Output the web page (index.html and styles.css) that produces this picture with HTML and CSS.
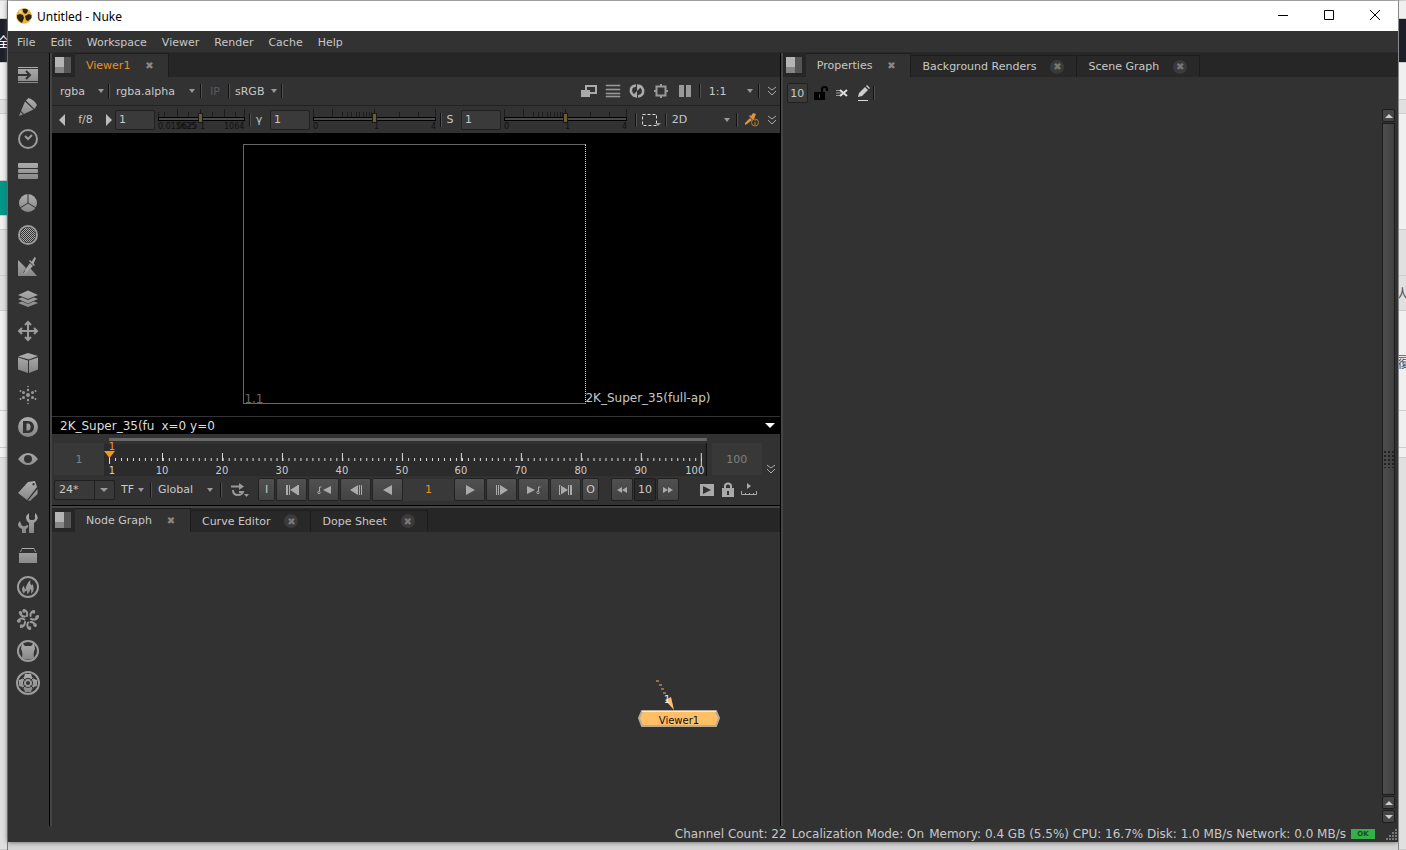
FILE: index.html
```
<!DOCTYPE html>
<html lang="en">
<head>
  <meta charset="UTF-8">
  <meta name="viewport" content="width=device-width, initial-scale=1">
  <title>Untitled - Nuke</title>
  <link rel="stylesheet" href="styles.css">
</head>
<body>
  <!-- browser page behind the window, left edge -->
  <div class="behind behind-left">
    <div class="strip h20"></div>
    <div class="strip dark h44"><span>全</span></div>
    <div class="strip h36"></div>
    <div class="strip grey h14"></div>
    <div class="strip h66"></div>
    <div class="strip teal h34"></div>
    <div class="strip h14"></div>
    <div class="strip grey h46"></div>
    <div class="strip grey h34"></div>
    <div class="strip h100"></div>
    <div class="strip h36"></div>
    <div class="strip h10"></div>
    <div class="strip grey rest"></div>
  </div>

  <div class="window">
    <header class="titlebar">
      <svg class="logo" viewBox="0 0 16 16"><circle cx="8" cy="8" r="7.8" fill="#e8b640"/><path d="M1 7l3-1 3 1 1 3-2 5-3-2-2-3zM6.500 1Q10 0 12 2l-1 3-2 1-2-2zM9 8l4-2 2.500 1v3L12 13l-2-1z" fill="#2b2410"/><path d="M2.500 3.500 5 2l1.500 2L4 5z" fill="#f6dc8c"/></svg>
      <span class="title">Untitled - Nuke</span>
      <button class="win-btn" aria-label="Minimize"><svg viewBox="0 0 12 12"><path d="M1 5.500h10"/></svg></button>
      <button class="win-btn" aria-label="Maximize"><svg viewBox="0 0 12 12"><path d="M1.500 .5h9v9h-9z"/></svg></button>
      <button class="win-btn" aria-label="Close"><svg viewBox="0 0 12 12"><path d="M1 0l10 10M11 0L1 10"/></svg></button>
    </header>

    <nav class="menubar">
      <button>File</button>
      <button>Edit</button>
      <button>Workspace</button>
      <button>Viewer</button>
      <button>Render</button>
      <button>Cache</button>
      <button>Help</button>
    </nav>

    <div class="main">
      <!-- node toolbar -->
      <aside class="toolbar">
        <svg class="defs" aria-hidden="true">
          <defs>
            <linearGradient id="g" gradientUnits="userSpaceOnUse" x1="0" y1="2" x2="0" y2="22"><stop offset="0" stop-color="#b0b0b0"/><stop offset="1" stop-color="#858585"/></linearGradient>
            <pattern id="dots" width="2" height="2" patternUnits="userSpaceOnUse"><rect width="1" height="1" fill="#aaa"/><rect x="1" y="1" width="1" height="1" fill="#aaa"/></pattern>
          </defs>
        </svg>
        <button aria-label="Image"><svg viewBox="0 0 24 24"><path d="M2 4h20v1H2zM2 6h20v12H2zM2 19h20v1H2z" fill="url(#g)"/><path d="M2 12h11M10 8l4 4-4 4" class="cut"/></svg></button>
        <button aria-label="Draw"><svg viewBox="0 0 24 24"><path d="M3 21l1.500-4 2.500 2.500zM5 16 9 6.500l8.500 8L8 19zM10 5.500l2.500-2.500q6 2 8.500 7l-2.500 4z" fill="url(#g)"/></svg></button>
        <button aria-label="Time"><svg viewBox="0 0 24 24"><circle cx="12" cy="12" r="9" class="line"/><path d="M9 9l3 3 4-4" class="line"/></svg></button>
        <button aria-label="Channel"><svg viewBox="0 0 24 24"><rect x="2" y="4" width="20" height="5" rx="1" fill="url(#g)"/><rect x="2" y="10" width="20" height="4" rx="1" fill="url(#g)"/><rect x="2" y="15" width="20" height="5" rx="1" fill="url(#g)"/></svg></button>
        <button aria-label="Color"><svg viewBox="0 0 24 24"><circle cx="12" cy="12" r="9" fill="url(#g)"/><path d="M12 3v9M12 12l-8 5M12 12l8 5" class="thin-cut"/></svg></button>
        <button aria-label="Filter"><svg viewBox="0 0 24 24"><circle cx="12" cy="12" r="9" class="line"/><circle cx="12" cy="12" r="7.500" fill="url(#dots)"/></svg></button>
        <button aria-label="Keyer"><svg viewBox="0 0 24 24"><path d="M2 5l8 8-3 5 5-2 2-3 7 8H2z" fill="url(#g)"/><path d="M14 8l3 3-7 7-2 1 1-4zM13 6l1-1 5 5-1 1zM15.500 7l3-5 1.500 1-2.500 6z" fill="#a5a5a5"/></svg></button>
        <button aria-label="Merge"><svg viewBox="0 0 24 24"><path d="M12 3.500l10 4.500-10 4L2 8zM2 12l4-1.500 6 2.500 6-2.500 4 1.500-10 4.500zM2 16l4-1.500 6 2.500 6-2.500 4 1.500-10 4z" fill="url(#g)"/></svg></button>
        <button aria-label="Transform"><svg viewBox="0 0 24 24"><path d="M12 3v18M3 12h18M9 6l3-3 3 3M9 18l3 3 3-3M6 9l-3 3 3 3M18 9l3 3-3 3" class="line"/></svg></button>
        <button aria-label="3D"><svg viewBox="0 0 24 24"><path d="M12 2l10 3-9 3.500L2 5.500zM2 6.500l10 3V22L2 18.500zM13 9.500l9-3v12L13 22z" fill="url(#g)"/></svg></button>
        <button aria-label="Particles"><svg viewBox="0 0 24 24"><g fill="#999"><circle cx="12" cy="12" r="2"/><circle cx="12" cy="7" r="1.200"/><circle cx="12" cy="17" r="1.200"/><circle cx="7.500" cy="9.500" r="1.500"/><circle cx="16.500" cy="9.500" r="1.500"/><circle cx="7.500" cy="14.500" r="1.500"/><circle cx="16.500" cy="14.500" r="1.500"/><circle cx="4.500" cy="8" r="1"/><circle cx="19.500" cy="8" r="1"/><circle cx="4.500" cy="16" r="1"/><circle cx="19.500" cy="16" r="1"/><circle cx="12" cy="3.500" r=".8"/><circle cx="12" cy="20.500" r=".8"/></g></svg></button>
        <button aria-label="Deep"><svg viewBox="0 0 24 24"><path fill-rule="evenodd" d="M12 2a10 10 0 1 1 0 20a10 10 0 0 1 0-20zM7 6v12h5c8 0 8-12 0-12zM10.500 8.500h1.500c3.500 0 3.500 7 0 7h-1.500z" fill="url(#g)"/></svg></button>
        <button aria-label="Views"><svg viewBox="0 0 24 24"><path fill-rule="evenodd" d="M2 12q4.500-6 10-6t10 6q-4.500 6-10 6T2 12zM12 8a4 4 0 1 0 0 8 4 4 0 0 0 0-8z" fill="url(#g)"/></svg></button>
        <button aria-label="MetaData"><svg viewBox="0 0 24 24"><path fill-rule="evenodd" d="M2 14L12 3l7-1 2 6-10 13zM17.500 4a1.200 1.200 0 1 0 .1 0zM21.500 10v5L14 22l-2-.5z" fill="url(#g)"/></svg></button>
        <button aria-label="ToolSets"><svg viewBox="0 0 24 24"><path d="M13 2q-6 5 0 10v10h5V12q7-5 1-10v5q0 2-3 2t-3-2zM4 10q-4 4 0 7l2 1v4h4v-4q3-2 2-4l-3 1q-3 1-4-2z" fill="url(#g)"/></svg></button>
        <button aria-label="Other"><svg viewBox="0 0 24 24"><path d="M3 10h18v10H3zM4 9l2-4h12l2 4h-1l-1-3H6L5 9z" fill="url(#g)"/></svg></button>
        <button aria-label="Furnace"><svg viewBox="0 0 24 24"><circle cx="12" cy="12" r="10" class="line"/><path d="M8 18.500q-4-4 0-8 0 3 1.500 4Q10 9 14.500 5q-1 4 1 5.500.5-1 .5-2 4 6-1 10.500 1-3-.5-5-.5 3-3.500 5.500.5-3-.5-4-2 1-2.500 3z" fill="url(#g)"/></svg></button>
        <button aria-label="Ocula"><svg viewBox="0 0 24 24"><path d="M11 9Q12 4 8 3M14.500 9Q14 5 18 4M15 12q6 2 7-3M14.500 15q4 0 5 4M12 15.500q-2 5 2 6.500M9 15q0 4-4 5M8.500 12.500Q4 10 2 14M9 9.500Q5 10 4 5" class="bold"/><g fill="#999"><circle cx="8" cy="4" r="1.800"/><circle cx="17.500" cy="5" r="1.800"/><circle cx="21" cy="10" r="1.800"/><circle cx="19" cy="18" r="1.800"/><circle cx="13.500" cy="21" r="1.800"/><circle cx="5.500" cy="19" r="1.800"/><circle cx="3" cy="14" r="1.800"/><circle cx="4.500" cy="6" r="1.800"/></g></svg></button>
        <button aria-label="Cara"><svg viewBox="0 0 24 24"><circle cx="12" cy="12" r="10" class="line"/><path d="M6 4l3 3h6l3-3 1 6q-2 3-1 9-6 3-12 0 1-6-1-9z" fill="url(#g)"/></svg></button>
        <button aria-label="Air"><svg viewBox="0 0 24 24"><circle cx="12" cy="12" r="11" class="line"/><path fill-rule="evenodd" d="M9 3h6l1 3 2 2 3 1v6l-3 1-2 2-1 3H9l-1-3-2-2-3-1V9l3-1 2-2zM12 7a5 5 0 1 0 0 10 5 5 0 0 0 0-10z" fill="url(#g)"/><circle cx="12" cy="12" r="3" class="line"/><path d="M6.500 6.500l3 3M17.500 6.500l-3 3M6.500 17.500l3-3M17.500 17.500l-3-3" class="thin-cut"/></svg></button>
      </aside>

      <div class="left-col">
        <section class="viewer-panel">
          <div class="tabs">
            <button class="pane-btn" aria-label="Pane menu"></button>
            <div class="tab active orange"><a href="#">Viewer1</a><button class="close" aria-label="Close">✖</button></div>
          </div>

          <div class="row channels">
            <select class="w-rgba" aria-label="Channels"><option>rgba</option></select>
            <i class="sep"></i>
            <select class="w-alpha" aria-label="Alpha channel"><option>rgba.alpha</option></select>
            <i class="sep"></i>
            <button class="ip">IP</button>
            <i class="sep"></i>
            <select class="w-lut" aria-label="Viewer process"><option>sRGB</option></select>
            <i class="sep"></i>
            <span class="grow"></span>
            <div class="view-icons">
              <button aria-label="Wipe"><svg viewBox="0 0 16 14"><path d="M5 6V2h10v7H9" fill="none" stroke="#aaa" stroke-width="2"/><path d="M0 6h9v7H0z" fill="#aaa"/></svg></button>
              <button aria-label="Scanlines"><svg viewBox="0 0 16 14"><path d="M1 1h14v1H1zM1 5h14v1H1zM1 9h14v1H1zM1 12h14v1H1z" fill="#999" stroke="#999" stroke-width=".6"/></svg></button>
              <button aria-label="Refresh"><svg viewBox="0 0 16 14"><path d="M7 1.500Q1 2 2 8q1 3 4 4M9 12.500q6-1 5-7-1-3-4-4" fill="none" stroke="#aaa" stroke-width="2.500"/><path d="M8 7v7l-5-2zM8 7V0l5 2z" fill="#aaa"/></svg></button>
              <button aria-label="Region"><svg viewBox="0 0 16 14"><path d="M3.500 2.500h9v9h-9zM8 0v2M8 12v2M1 7h2M13 7h2" fill="none" stroke="#999" stroke-width="2"/></svg></button>
              <button aria-label="Pause"><svg viewBox="0 0 16 14"><path d="M2 1h5v12H2zM9 1h5v12H9z" fill="#999"/></svg></button>
            </div>
            <i class="sep"></i>
            <select class="w-zoom" aria-label="Zoom"><option>1:1</option></select>
            <i class="sep"></i>
            <button class="chev" aria-label="More"><svg viewBox="0 0 10 10"><path d="M1 1l4 3 4-3M1 5l4 4 4-4"/></svg></button>
          </div>

          <div class="row gains">
            <button class="nudge" aria-label="Previous stop"><svg viewBox="0 0 6 12"><path d="M6 0v12L0 6z"/></svg></button>
            <span class="fstop">f/8</span>
            <button class="nudge" aria-label="Next stop"><svg viewBox="0 0 6 12"><path d="M0 0v12l6-6z"/></svg></button>
            <input class="num" type="text" value="1" aria-label="Gain">
            <div class="slider slider-gain">
              <svg viewBox="0 0 87 22"><path d="M0.500 3v7M6.500 3v7M19.500 0v10M30.500 3v7M42.500 0v10M54.500 3v7M66.500 0v10M77.500 3v7M86.500 0v10" class="tick"/><text x="0" y="20">0.015625</text><text x="19" y="20">0625</text><text x="42" y="20">1</text><text x="66" y="20">1064</text></svg>
              <input type="range" min="0" max="100" value="49" aria-label="Gain slider">
            </div>
            <i class="sep"></i>
            <label class="lbl" for="gamma">γ</label>
            <input class="num" id="gamma" type="text" value="1">
            <div class="slider">
              <svg viewBox="0 0 123 22"><path d="M0.500 0v10M19.500 0v10M29.500 3v7M34.500 3v7M38.500 3v7M43.500 3v7M46.500 3v7M50.500 3v7M53.500 3v7M56.500 3v7M58.500 3v7M61.500 0v10M86.500 3v7M105.500 3v7M122.500 0v10" class="tick"/><text x="0" y="20">0</text><text x="61" y="20">1</text><text x="118" y="20">4</text></svg>
              <input type="range" min="0" max="100" value="50" aria-label="Gamma slider">
            </div>
            <i class="sep"></i>
            <label class="lbl" for="sat">S</label>
            <input class="num" id="sat" type="text" value="1">
            <div class="slider">
              <svg viewBox="0 0 123 22"><path d="M0.500 0v10M19.500 0v10M29.500 3v7M34.500 3v7M38.500 3v7M43.500 3v7M46.500 3v7M50.500 3v7M53.500 3v7M56.500 3v7M58.500 3v7M61.500 0v10M86.500 3v7M105.500 3v7M122.500 0v10" class="tick"/><text x="0" y="20">0</text><text x="61" y="20">1</text><text x="118" y="20">4</text></svg>
              <input type="range" min="0" max="100" value="50" aria-label="Saturation slider">
            </div>
            <span class="grow"></span>
            <i class="sep"></i>
            <button class="marquee" aria-label="Selection mode"><svg viewBox="0 0 20 14"><path d="M1.500 1.500h14v11h-14z" fill="none" stroke="#ddd" stroke-dasharray="3 2"/><path d="M14 10h6l-3 3z" fill="#999"/></svg></button>
            <i class="sep"></i>
            <select class="w-2d" aria-label="View"><option>2D</option></select>
            <i class="sep"></i>
            <button class="picker" aria-label="Color sampling"><svg viewBox="0 0 16 16"><path d="M1 11l5-5 2 2-5 4-2 1zM5 4l1-1 5 5-1 1zM7 4l2-3 3 1-2 5z" fill="#d9963e"/><circle cx="11" cy="10.500" r="3.500" fill="#323232" stroke="#b87932"/><path d="M11 8v1M11 10v3" stroke="#b87932"/></svg></button>
            <button class="chev" aria-label="More"><svg viewBox="0 0 10 10"><path d="M1 1l4 3 4-3M1 5l4 4 4-4"/></svg></button>
          </div>

          <!-- the image plane -->
          <div class="canvas">
            <div class="format">
              <span class="origin">1,1</span>
              <span class="format-name">2K_Super_35(full-ap)</span>
            </div>
          </div>
          <div class="info">
            <span class="info-format">2K_Super_35(fu</span>
            <span>x=0 y=0</span>
            <button aria-label="Collapse"><svg viewBox="0 0 10 5"><path d="M0 0h10L5 5z" fill="#fff"/></svg></button>
          </div>

          <div class="timeline">
            <span class="range">1</span>
            <svg class="ruler" viewBox="0 0 603 41">
              <rect x="0" y="9" width="603" height="32" fill="#2b2b2b"/>
              <rect x="5" y="3" width="598" height="3" fill="#686868"/>
              <path d="M602.500 8v33" stroke="#111"/>
              <path d="M5 24.500H598" pathLength="594.600" stroke="#ddd" stroke-width="3" stroke-dasharray="1 5"/>
              <path d="M5.500 20v9M58.500 18v8M118.500 18v8M178.500 18v8M238.500 18v8M298.500 18v8M357.500 18v8M417.500 18v8M477.500 18v8M537.500 18v8M597.500 18v13" stroke="#ddd"/>
              <path d="M0 16h11l-5.500 7z" fill="#f7941d"/>
              <g class="frames">
                <text x="8" y="15" class="cur">1</text>
                <text x="8" y="39">1</text><text x="58" y="39">10</text><text x="118" y="39">20</text><text x="178" y="39">30</text><text x="238" y="39">40</text><text x="298" y="39">50</text><text x="357" y="39">60</text><text x="417" y="39">70</text><text x="477" y="39">80</text><text x="537" y="39">90</text><text x="591" y="39">100</text>
              </g>
            </svg>
            <span class="range">100</span>
            <button class="chev" aria-label="More"><svg viewBox="0 0 10 10"><path d="M1 1l4 3 4-3M1 5l4 4 4-4"/></svg></button>
          </div>

          <div class="playback">
            <select class="fps" aria-label="Frames per second"><option>24*</option></select>
            <select class="w-tf" aria-label="Time format"><option>TF</option></select>
            <i class="sep"></i>
            <select class="w-global" aria-label="Frame range"><option>Global</option></select>
            <i class="sep"></i>
            <button class="loop" aria-label="Playback mode"><svg viewBox="0 0 20 16"><path d="M1 4.500h10M3 8q0 5 5 5 4 0 5-3H9" fill="none" stroke="#999" stroke-width="2"/><path d="M9 1l5 3.500L9 8z" fill="#999"/><path d="M14 12h5l-2.500 3z" fill="#999"/></svg></button>
            <div class="keys">
              <button class="key slim">I</button>
              <button class="key" aria-label="First frame"><svg viewBox="0 0 16 12"><path d="M2 1h2v10H2zM5 1h1v10H5zM14 1v10L6 6zM13 1h2v10h-2z"/></svg></button>
              <button class="key" aria-label="Previous keyframe"><svg viewBox="0 0 16 12"><path d="M15 2v8L7 6z"/><path d="M5.500 3h-2v4" class="st"/><circle cx="3" cy="8.500" r="1.200" class="st"/></svg></button>
              <button class="key" aria-label="Step back"><svg viewBox="0 0 16 12"><path d="M10 1v10L2 6zM11 1h1v10h-1zM13 1h1v10h-1z"/></svg></button>
              <button class="key" aria-label="Play backward"><svg viewBox="0 0 16 12"><path d="M12 1v10L3 6z"/></svg></button>
            </div>
            <input class="frame" type="text" value="1" aria-label="Current frame">
            <div class="keys">
              <button class="key" aria-label="Play forward"><svg viewBox="0 0 16 12"><path d="M4 1v10l9-5z"/></svg></button>
              <button class="key" aria-label="Step forward"><svg viewBox="0 0 16 12"><path d="M6 1v10l8-5zM2 1h1v10H2zM4 1h1v10H4z"/></svg></button>
              <button class="key" aria-label="Next keyframe"><svg viewBox="0 0 16 12"><path d="M1 2v8l8-4z"/><path d="M14.500 3h-2v4" class="st"/><circle cx="12" cy="8.500" r="1.200" class="st"/></svg></button>
              <button class="key" aria-label="Last frame"><svg viewBox="0 0 16 12"><path d="M1 1h2v10H1zM2 1v10l8-5zM10 1h1v10h-1zM12 1h2v10h-2z"/></svg></button>
              <button class="key slim">O</button>
            </div>
            <div class="keys skip">
              <button class="key mid" aria-label="Skip back"><svg viewBox="0 0 16 12"><path d="M8 3v6L3 6zM13 3v6L8 6z"/></svg></button>
              <input class="step" type="text" value="10" aria-label="Frame increment">
              <button class="key mid" aria-label="Skip forward"><svg viewBox="0 0 16 12"><path d="M3 3v6l5-3zM8 3v6l5-3z"/></svg></button>
            </div>
            <span class="grow"></span>
            <div class="extras">
              <button aria-label="Flipbook"><svg viewBox="0 0 16 16"><path fill-rule="evenodd" d="M1 2h14v12H1zM4 4v8l8-4z" fill="#aaa"/></svg></button>
              <button aria-label="Lock range"><svg viewBox="0 0 16 16"><path d="M5 7V4q0-2.500 3-2.500T11 4v3" fill="none" stroke="#aaa" stroke-width="2"/><path d="M2 6h12v9H2z" fill="#aaa"/><path d="M8 9v4" stroke="#333" stroke-width="2"/></svg></button>
              <button aria-label="Set range"><svg viewBox="0 0 16 16"><path d="M6 1v6l4-3z" fill="#aaa"/><path d="M.5 9v3.500h15V9M4.500 11v2M8.500 11v2M12.500 11v2" fill="none" stroke="#aaa"/></svg></button>
            </div>
          </div>
        </section>

        <section class="node-panel">
          <div class="tabs">
            <button class="pane-btn" aria-label="Pane menu"></button>
            <div class="tab active wide"><a href="#">Node Graph</a><button class="close" aria-label="Close">✖</button></div>
            <div class="tab"><a href="#">Curve Editor</a><button class="close" aria-label="Close">✖</button></div>
            <div class="tab"><a href="#">Dope Sheet</a><button class="close" aria-label="Close">✖</button></div>
          </div>
          <div class="graph">
            <div class="node">
              <svg class="arrow" viewBox="0 0 20 32"><path d="M0 2h3M3 6h3M5 10h3M7 14h3" stroke="#e8b263"/><path d="M9 21l6-3 3 13z" fill="#ffbf66"/><text x="8" y="24">1</text></svg>
              <svg class="node-body" viewBox="0 0 82 17"><path d="M4 1h74l3 7-3 8H4L1 8z" fill="#ffbf66" stroke="#b9aa96" stroke-width="2"/><path d="M4 1.500h74" stroke="#eee"/></svg>
              <span class="node-name">Viewer1</span>
            </div>
          </div>
        </section>
      </div>

      <section class="right-col">
        <div class="tabs">
          <button class="pane-btn" aria-label="Pane menu"></button>
          <div class="tab active"><a href="#">Properties</a><button class="close" aria-label="Close">✖</button></div>
          <div class="tab"><a href="#">Background Renders</a><button class="close" aria-label="Close">✖</button></div>
          <div class="tab"><a href="#">Scene Graph</a><button class="close" aria-label="Close">✖</button></div>
        </div>
        <div class="prop-bar">
          <input class="max" type="text" value="10" aria-label="Maximum panels">
          <button aria-label="Lock panels"><svg viewBox="0 0 16 16"><path d="M9 7V4q0-2 2.500-2T14 4v2" fill="none" stroke="#000" stroke-width="2"/><path d="M1 7h11v8H1z" fill="#000"/><path d="M6.500 9v4" stroke="#444"/></svg></button>
          <button aria-label="Clear panels"><svg viewBox="0 0 16 16"><path d="M2 5.500h6M2 8h5M2 10.500h6" stroke="#999"/><path d="M6 5l7 6M13 5l-7 6" stroke="#ddd" stroke-width="2"/></svg></button>
          <button aria-label="Edit"><svg viewBox="0 0 16 16"><path d="M3 12l1-4 6-6 3 3-6 6zM11 1l1-1 3 3-1 1z" fill="#ccc"/><path d="M3 15.500h10" stroke="#ddd"/></svg></button>
          <i class="sep"></i>
        </div>
        <div class="scroller">
          <div class="props"></div>
          <div class="scrollbar">
            <button aria-label="Scroll up"><svg viewBox="0 0 8 4"><path d="M0 4h8L4 0z"/></svg></button>
            <div class="thumb"><i class="grip"></i></div>
            <button aria-label="Scroll up"><svg viewBox="0 0 8 4"><path d="M0 4h8L4 0z"/></svg></button>
            <button aria-label="Scroll down"><svg viewBox="0 0 8 4"><path d="M0 0h8L4 4z"/></svg></button>
          </div>
        </div>
      </section>
    </div>

    <footer class="status">
      <span>Channel Count: 22</span>
      <span>Localization Mode: On</span>
      <span>Memory: 0.4 GB (5.5%) CPU: 16.7% Disk: 1.0 MB/s Network: 0.0 MB/s</span>
      <b class="ok">OK</b>
      <svg class="resize" viewBox="0 0 12 12"><path d="M9 1h2v2H9zM9 4h2v2H9zM6 4h2v2H6zM9 7h2v2H9zM6 7h2v2H6zM3 7h2v2H3zM9 10h2v2H9zM6 10h2v2H6zM3 10h2v2H3zM0 10h2v2H0z" fill="#777"/></svg>
    </footer>
  </div>

  <!-- right edge -->
  <div class="behind behind-right">
    <div class="strip h20"></div>
    <div class="strip dark h44"></div>
    <div class="strip h36"></div>
    <div class="strip grey h14"></div>
    <div class="strip h115"></div>
    <div class="strip grey h46"></div>
    <div class="strip grey h34"><span>人</span></div>
    <div class="strip h100"><span>履</span></div>
    <div class="strip h36"></div>
    <div class="strip h10"></div>
    <div class="strip grey rest"></div>
  </div>
</body>
</html>
```
FILE: styles.css
```
* { box-sizing: border-box; }
body { margin: 0; height: 100vh; display: grid; grid-template-columns: 8px 1fr 8px; font-family: "DejaVu Sans", Verdana, sans-serif; font-size: 11px; color: #c8c8c8; background: #d4d4d4; overflow: hidden; }
button, input, select { font: inherit; color: inherit; margin: 0; padding: 0; border: none; background: none; border-radius: 0; outline: none; }
button { display: flex; align-items: center; justify-content: center; }
a { color: inherit; text-decoration: none; }
svg { display: block; }
.grow { flex: 1; }

/* page behind the window */
.behind { display: flex; flex-direction: column; overflow: hidden; padding-top: 1px; }
.behind-left { border-right: 1px solid #777; }
.behind-right { border-left: 1px solid #888; }
.strip { flex: none; background: #f0f0f0; border-bottom: 1px solid #ccc; overflow: hidden; display: flex; align-items: center; justify-content: center; font-family: "Noto Sans CJK SC", sans-serif; font-size: 14px; color: #555; }
.strip.grey { background: #e0e0e0; }
.strip.dark { background: #1e1f29; color: #fff; }
.strip.teal { background: #009788; }
.h10 { height: 10px; }
.h14 { height: 14px; }
.h20 { height: 18px; }
.h34 { height: 35px; }
.h36 { height: 37px; }
.h44 { height: 44px; }
.h46 { height: 46px; }
.h66 { height: 67px; }
.h100 { height: 100px; }
.h115 { height: 116px; }
.rest { flex: 1; }

.window { display: flex; flex-direction: column; min-width: 0; margin: 1px 0 8px; background: #323232; box-shadow: 0 0 5px #555; }
.titlebar { height: 30px; flex: none; display: flex; align-items: center; background: #fff; color: #000; padding-left: 8px; }
.logo { width: 16px; height: 16px; margin-right: 5px; }
.title { flex: 1; font-family: "Noto Sans", sans-serif; font-size: 12px; }
.win-btn { width: 46px; height: 30px; }
.win-btn svg { width: 12px; height: 12px; fill: none; stroke: #000; }

.menubar { height: 22px; flex: none; display: flex; padding-left: 9px; gap: 15px; border-bottom: 1px solid #2a2a2a; }
.menubar button { height: 22px; }

.main { flex: 1; display: flex; min-height: 0; }

/* node toolbar */
.toolbar { width: 42px; flex: none; padding-top: 6px; border-right: 1px solid #000; }
.toolbar button { width: 40px; height: 32px; }
.toolbar button svg { width: 24px; height: 24px; }
.defs { width: 0; height: 0; }
.line { fill: none; stroke: #9c9c9c; stroke-width: 2; }
.bold { fill: none; stroke: #9c9c9c; stroke-width: 2; stroke-linecap: round; }
.cut { fill: none; stroke: #323232; stroke-width: 2; }
.thin-cut { fill: none; stroke: #323232; stroke-width: 1; }

.left-col { flex: 730; min-width: 0; display: flex; flex-direction: column; border-left: 2px solid #444; border-right: 1px solid #000; }
.right-col { flex: 617; min-width: 0; display: flex; flex-direction: column; border-left: 2px solid #444; }

/* tabs */
.tabs { height: 24px; flex: none; display: flex; align-items: flex-end; background: #262626; padding-left: 3px; }
.pane-btn { width: 16px; height: 16px; align-self: center; margin-right: 4px; background: linear-gradient(90deg, transparent 9px, #555 9px), linear-gradient(#b5b5b5 10px, #868686 10px); }
.tab { height: 22px; display: flex; align-items: center; padding: 0 12px 0 11px; gap: 14px; border: 1px solid #1c1c1c; border-width: 1px 1px 0 0; border-radius: 2px 2px 0 0; background: #282828; }
.tab.active { height: 24px; gap: 12px; background: #323232; }
.tab.orange { color: #ee8e24; }
.close { width: 14px; height: 14px; border-radius: 50%; background: #3a3a3a; color: #777; font-size: 10px; }
.tab.active .close { background: none; color: #888; }

/* viewer controls */
.row { flex: none; display: flex; align-items: center; }
.channels { height: 29px; border-bottom: 1px solid #222; padding-left: 8px; }
.gains { height: 27px; padding-left: 7px; }
.sep { width: 2px; height: 14px; flex: none; border-left: 1px solid #111; border-right: 1px solid #505050; }
select { appearance: none; height: 20px; background: url("data:image/svg+xml,%3Csvg xmlns='http://www.w3.org/2000/svg' width='6' height='4'%3E%3Cpath d='M0 0h6L3 4z' fill='%23999'/%3E%3C/svg%3E") no-repeat right 5px center; }
.w-rgba { width: 48px; padding: 0; background-position: right 4px center; }
.w-alpha { width: 84px; margin-left: 6px; }
.w-lut { width: 46px; margin-left: 5px; background-position: right 4px center; }
.w-zoom { width: 49px; margin-left: 8px; }
.w-2d { width: 64px; margin-left: 5px; background-position: right 6px center; }
.w-tf { width: 29px; margin-left: 6px; background-position: right 6px center; }
.w-global { width: 62px; margin-left: 6px; background-position: right 7px center; }
.ip { width: 26px; color: #5a5a5a; }
.view-icons { display: flex; gap: 8px; margin-right: 6px; }
.view-icons svg { width: 16px; height: 14px; }
.chev { width: 20px; flex: none; padding-left: 4px; }
.chev svg { width: 10px; height: 10px; fill: none; stroke: #aaa; }
.nudge svg { width: 6px; height: 12px; fill: #bbb; }
.fstop { width: 41px; text-align: center; }
.num { width: 40px; height: 20px; flex: none; margin: 0 3px; padding-left: 3px; background: #3a3a3a; border: 1px solid #202020; border-radius: 2px; }
.lbl { width: 16px; flex: none; text-align: center; }
.slider { width: 123px; flex: none; display: grid; margin-right: 4px; }
.slider-gain { width: 87px; }
.slider svg, .slider input { grid-area: 1 / 1; width: 100%; height: 22px; }
.slider text { font-size: 8px; fill: #111; }
.tick { stroke: #1c1c1c; fill: none; }
.slider input { appearance: none; height: 20px; }
.slider input::-webkit-slider-runnable-track { height: 4px; border: 1px solid #000; background: #4a4a4a; }
.slider input::-webkit-slider-thumb { -webkit-appearance: none; width: 5px; height: 10px; margin-top: -5px; background: #6d5c33; border: 1px solid #191919; }
.marquee { width: 28px; }
.marquee svg { width: 20px; height: 14px; }
.picker { margin-left: 6px; }
.picker svg { width: 16px; height: 16px; }

/* image plane */
.canvas { flex: none; height: 283px; background: #000; display: flex; justify-content: center; padding: 11px 2px 0 0; font-size: 12px; }
.format { position: relative; width: 343px; height: 260px; border: 1px solid #666; border-right: 1px dotted #ddd; }
.origin { position: absolute; left: 0; bottom: -3px; color: #666; }
.format-name { position: absolute; left: 100%; bottom: -2px; white-space: nowrap; }
.info { flex: none; height: 18px; display: flex; align-items: center; gap: 7px; padding: 0 5px 0 8px; background: #000; border-top: 1px solid #333; color: #ddd; font-size: 12px; }
.info button { margin-left: auto; }
.info svg { width: 10px; height: 5px; }

/* timeline */
.timeline { flex: none; display: flex; padding: 1px 0 0 2px; }
.range { width: 50px; height: 32px; flex: none; margin-top: 8px; display: flex; align-items: center; justify-content: center; background: #383838; color: #808080; }
.ruler { flex: 1; min-width: 0; margin-right: 5px; }
.frames text { font-size: 10px; fill: #ccc; text-anchor: middle; }
.frames .cur { fill: #f7941d; }
.timeline .chev { width: 18px; padding-left: 0; align-items: flex-end; padding-bottom: 2px; }
.playback { flex: none; height: 29px; display: flex; align-items: center; padding: 0 0 1px 2px; }
.fps { width: 61px; padding-left: 4px; border: 1px solid #202020; border-radius: 2px; background-color: #393939; background-image: linear-gradient(#202020, #202020), url("data:image/svg+xml,%3Csvg xmlns='http://www.w3.org/2000/svg' width='8' height='4'%3E%3Cpath d='M0 0h8L4 4z' fill='%23999'/%3E%3C/svg%3E"); background-size: 1px 20px, 8px 4px; background-position: right 19px center, right 6px center; }
.loop { width: 36px; }
.loop svg { width: 20px; height: 16px; }
.keys { display: flex; gap: 1px; }
.key { width: 31px; height: 23px; background: linear-gradient(#505050, #434343); border: 1px solid #222; border-radius: 2px; }
.key svg { width: 16px; height: 12px; fill: #aaa; }
.key .st { fill: none; stroke: #aaa; }
.key.slim { width: 17px; }
.key.mid { width: 22px; }
.frame { width: 51px; height: 22px; flex: none; background: #393939; color: #ee8e24; text-align: center; }
.step { width: 22px; height: 23px; text-align: center; background: #2b2b2b; border: 1px solid #1c1c1c; border-radius: 2px; }
.skip { margin-left: 12px; }
.extras { display: flex; gap: 5px; margin-right: 23px; }
.extras svg { width: 16px; height: 16px; }

/* node graph */
.node-panel { flex: 1; display: flex; flex-direction: column; border-top: 1px solid #000; }
.node-panel .tabs { height: 26px; border-top: 2px solid #444; }
.graph { flex: 1; position: relative; }
.node { position: absolute; left: 586px; top: 178px; width: 82px; height: 17px; display: flex; align-items: center; justify-content: center; color: #111; font-size: 10px; }
.node-body { position: absolute; inset: 0; }
.node-name { position: relative; padding-top: 5px; }
.arrow { position: absolute; left: 18px; bottom: 16px; width: 20px; height: 32px; }
.arrow text { font-size: 10px; fill: #eee; }

/* properties */
.prop-bar { height: 32px; flex: none; display: flex; align-items: center; gap: 5px; padding-left: 4px; }
.prop-bar .max { width: 21px; height: 20px; text-align: center; background: #3a3a3a; border: 1px solid #202020; border-radius: 2px; }
.prop-bar svg { width: 16px; height: 16px; }
.prop-bar .sep { margin-left: -3px; }
.scroller { flex: 1; display: flex; min-height: 0; padding-right: 3px; }
.props { flex: 1; }
.scrollbar { width: 13px; display: flex; flex-direction: column; gap: 1px; padding-bottom: 3px; }
.scrollbar button { width: 13px; height: 13px; flex: none; background: #464646; border: 1px solid #1c1c1c; border-radius: 2px; }
.scrollbar svg { width: 8px; height: 4px; fill: #ccc; }
.thumb { flex: 1; display: flex; align-items: center; justify-content: center; background: linear-gradient(90deg, #4d4d4d, #414141); border: 1px solid #1c1c1c; }
.grip { width: 11px; height: 18px; background: radial-gradient(circle, #222 1px, transparent 1px) 0 0 / 4px 4px; }

.status { height: 16px; flex: none; display: flex; align-items: center; justify-content: flex-end; gap: 5px; white-space: nowrap; font-size: 12px; }
.ok { width: 24px; height: 10px; background: #36ae49; color: #16501f; font-size: 7px; line-height: 10px; text-align: center; }
.resize { width: 12px; height: 12px; margin-left: 6px; }
```
